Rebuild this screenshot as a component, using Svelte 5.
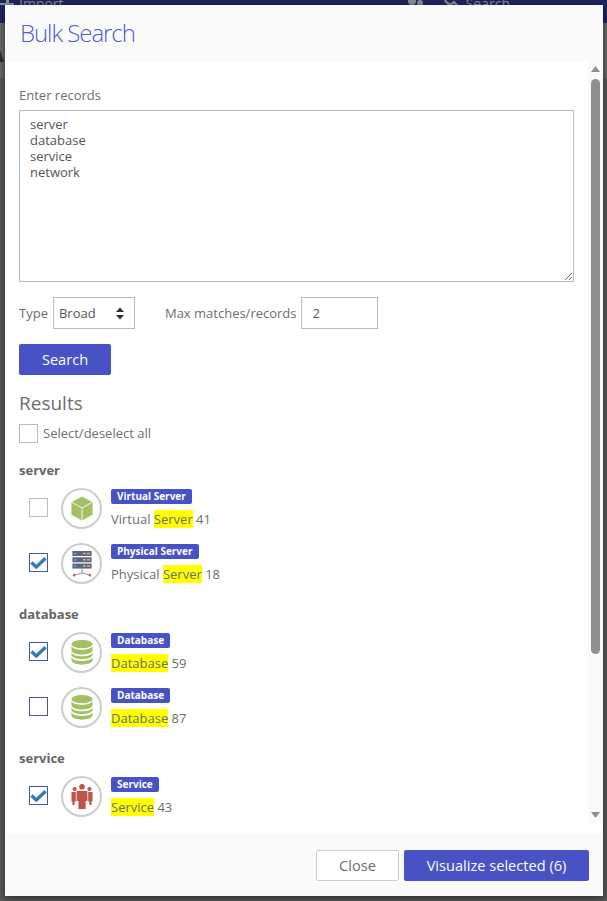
<script>
  const sections = [
    { title: 'server', items: [
      { icon: 'cube', badge: 'Virtual Server', pre: 'Virtual ', hit: 'Server', post: ' 41', state: 'off' },
      { icon: 'rack', badge: 'Physical Server', pre: 'Physical ', hit: 'Server', post: ' 18', state: 'on' }
    ]},
    { title: 'database', items: [
      { icon: 'db', badge: 'Database', pre: '', hit: 'Database', post: ' 59', state: 'on' },
      { icon: 'db', badge: 'Database', pre: '', hit: 'Database', post: ' 87', state: 'hover' }
    ]},
    { title: 'service', items: [
      { icon: 'people', badge: 'Service', pre: '', hit: 'Service', post: ' 43', state: 'on' }
    ]}
  ];
</script>

<div class="page">
  <div class="topbar">
    <div class="tool left">
      <svg width="14" height="6" viewBox="0 0 14 6"><path d="M6 0h3v3h5v3H0V3h6z" fill="#8d8e9e"/></svg>
      <span>Import</span>
    </div>
    <div class="tool right">
      <svg width="18" height="8" viewBox="0 0 18 8"><g fill="#8d8e9e"><circle cx="6" cy="1" r="4"/><circle cx="14" cy="3" r="3"/></g></svg>
      <svg class="mag" width="15" height="8" viewBox="0 0 15 8"><path d="M1 0c1 2.500 3 4 5.500 4S9 3 10 2l4 4.500" fill="none" stroke="#8d8e9e" stroke-width="2.200"/></svg>
      <span>Search</span>
    </div>
  </div>
  <div class="dim">
    <svg class="mark" width="4" height="12" viewBox="0 0 4 12"><path d="M0 0 4 12H0z" fill="#333"/></svg>
  </div>

  <div class="modal">
    <header class="head"><h1>Bulk Search</h1></header>

    <div class="middle">
      <div class="scroll">
        <div class="content">
          <label class="lbl" for="records">Enter records</label>
          <textarea id="records" spellcheck="false">server
database
service
network</textarea>

          <div class="opts">
            <span class="optlabel">Type</span>
            <div class="selectbox">
              <span>Broad</span>
              <svg width="8" height="13" viewBox="0 0 8 13"><path d="M4 0.5 8 5H0zM4 12.500 0 8h8z" fill="#333"/></svg>
            </div>
            <span class="optlabel max">Max matches/records</span>
            <input class="num" value="2" />
          </div>

          <button class="primary search-btn">Search</button>

          <h2>Results</h2>
          <div class="all"><span class="cb"></span><span class="alltext">Select/deselect all</span></div>

          <div class="results">
            {#each sections as s}
              <h3>{s.title}</h3>
              {#each s.items as it}
                <div class="row">
                  <span class="cb {it.state}">
                    {#if it.state === 'on'}
                      <svg width="17" height="13" viewBox="0 0 17 13"><path d="M1.500 6.500 6.300 11 15.500 2.300" fill="none" stroke="#337ab7" stroke-width="3.400"/></svg>
                    {/if}
                  </span>
                  <span class="circle">
                    {#if it.icon === 'cube'}
                      <svg width="22" height="25" viewBox="0 0 24 26" preserveAspectRatio="none">
                        <path d="M12 0.500 23.500 6.500V19.500L12 25.500.5 19.500V6.500z" fill="#a5bf63"/>
                        <path d="M1 6.500 12 12.500 23 6.500M12 12.500V25" fill="none" stroke="#e4ecd0" stroke-width="1.300"/>
                      </svg>
                    {:else if it.icon === 'rack'}
                      <svg width="20" height="26" viewBox="0 0 24 29" preserveAspectRatio="none">
                        <rect x="0.500" y="0" width="23" height="5.600" fill="#5c6488"/>
                        <rect x="0.500" y="7" width="23" height="5.600" fill="#5c6488"/>
                        <rect x="0.500" y="14" width="23" height="5.600" fill="#5c6488"/>
                        <path d="M13 2.800h3.500M18 2.800h3.500M13 9.800h3.500M18 9.800h3.500M13 16.800h3.500M18 16.800h3.500" stroke="#e9b44c" stroke-width="1.600"/>
                        <path d="M3 2.800h2M3 9.800h2M3 16.800h2" stroke="#a4c0d8" stroke-width="1.400"/>
                        <path d="M12 20v4.500M2.500 27 12 24.500 21.500 27" fill="none" stroke="#7c82a0" stroke-width="1"/>
                        <circle cx="2.500" cy="27" r="1.500" fill="#e2574c"/>
                        <circle cx="21.500" cy="27" r="1.500" fill="#e2574c"/>
                      </svg>
                    {:else if it.icon === 'db'}
                      <svg width="22" height="25" viewBox="0 0 24 27" preserveAspectRatio="none">
                        <ellipse cx="12" cy="4.500" rx="11.500" ry="4.500" fill="#a5bf63"/>
                        <path d="M.5 6.500C2 9.500 7 10.600 12 10.600S22 9.500 23.500 6.500V11.500C22 14.500 17 15.600 12 15.600S2 14.500.5 11.500z" fill="#a5bf63"/>
                        <path d="M.5 13.500C2 16.500 7 17.600 12 17.600S22 16.500 23.500 13.500V16.500C22 19.500 17 20.600 12 20.600S2 19.500.5 16.500z" fill="#a5bf63"/>
                        <path d="M.5 18.500C2 21.500 7 22.600 12 22.600S22 21.500 23.500 18.500V22.500C22 25.500 17 26.600 12 26.600S2 25.500.5 22.500z" fill="#a5bf63"/>
                      </svg>
                    {:else}
                      <svg width="22" height="25" viewBox="0 0 22 25">
                        <g fill="#c1534a">
                          <circle cx="11" cy="2.800" r="2.800"/>
                          <circle cx="3.600" cy="5" r="2.100"/>
                          <circle cx="18.400" cy="5" r="2.100"/>
                          <path d="M5.600 7h10.800v10h-1.800v8H7.400v-8H5.600z"/>
                          <path d="M0.500 8h4.300v9.500H3.600V21H1.400v-3.500H0.500z"/>
                          <path d="M17.200 8h4.300v9.500h-.9V21h-2.200v-3.500h-1.200z"/>
                        </g>
                      </svg>
                    {/if}
                  </span>
                  <div class="info">
                    <span class="badge">{it.badge}</span>
                    <span class="name">{it.pre}<mark>{it.hit}</mark>{it.post}</span>
                  </div>
                </div>
              {/each}
            {/each}
          </div>
        </div>
      </div>
      <div class="bar">
        <svg class="arrow" width="9" height="6" viewBox="0 0 9 6"><path d="M4.500 0 9 6H0z" fill="#8f8f8f"/></svg>
        <span class="thumb"></span>
        <svg class="arrow down" width="9" height="6" viewBox="0 0 9 6"><path d="M0 0H9L4.500 6z" fill="#8f8f8f"/></svg>
      </div>
    </div>

    <footer class="foot">
      <button class="ghost">Close</button>
      <button class="primary viz">Visualize selected (6)</button>
    </footer>
  </div>
</div>

<style>
  :global(body) { margin: 0; background: #565656; }
  * { box-sizing: border-box; }
  .page {
    position: relative;
    width: 607px;
    height: 901px;
    overflow: hidden;
    background: #5a5a5a;
    font-family: "Open Sans", sans-serif;
    font-size: 13px;
    color: #6e6e6e;
  }
  .topbar {
    height: 23px;
    background: #1f2561;
    color: #8d8e9e;
    font-size: 14px;
    display: flex;
    justify-content: space-between;
    line-height: 8px;
    padding: 0 97px 0 0;
  }
  .tool { display: flex; align-items: flex-start; height: 5px; overflow: hidden; }
  .tool span { display: block; }
  .left span { margin-left: 5px; }
  .mag { margin-left: 20px; }
  .right span { margin-left: 7px; }
  .dim { height: 55px; background: #6a6a6a; padding-top: 27px; }
  .mark { display: block; }
  .modal {
    position: absolute;
    left: 5px;
    top: 5px;
    width: 598px;
    height: 891px;
    background: #fafafa;
    display: flex;
    flex-direction: column;
    box-shadow: 0 2px 8px rgba(0,0,0,.55);
  }
  .head { height: 56px; padding: 13px 15px 0; flex: none; }
  h1 {
    margin: 0;
    font-size: 24px;
    font-weight: 300;
    line-height: 30px;
    letter-spacing: -1.05px;
    color: #4f5ad0;
  }
  .middle {
    height: 772px;
    flex: none;
    background: #fff;
    display: flex;
    align-items: flex-start;
  }
  .scroll { flex: 1; height: 772px; overflow: hidden; }
  .content { padding: 25px 14px 0; }
  .lbl { display: block; line-height: 18px; height: 24px; }
  textarea {
    display: block;
    width: 555px;
    height: 172px;
    border: 1px solid #bbb;
    border-radius: 0;
    padding: 5px 10px;
    margin: 0;
    font: 13px/16px "Open Sans", sans-serif;
    color: #555;
    background: #fff;
    outline: none;
  }
  .opts { display: flex; align-items: center; margin-top: 15px; height: 32px; }
  .optlabel { line-height: 18px; }
  .selectbox {
    width: 82px;
    height: 32px;
    margin-left: 5px;
    border: 1px solid #bbb;
    display: flex;
    align-items: center;
    justify-content: space-between;
    padding: 0 10px 0 5px;
    color: #555;
  }
  .max { margin-left: 30px; }
  .num {
    width: 77px;
    height: 32px;
    margin-left: 4px;
    border: 1px solid #bbb;
    border-radius: 0;
    padding: 0 11px;
    font: 13px "Open Sans", sans-serif;
    color: #555;
    outline: none;
  }
  button { font-family: "Open Sans", sans-serif; cursor: pointer; }
  .primary {
    background: #4752c4;
    color: #fff;
    border: 0;
    border-radius: 2px;
    font-size: 14.6px;
    height: 31px;
    padding: 0 0 2px;
  }
  .search-btn { display: block; width: 92px; margin-top: 15px; }
  h2 {
    margin: 15px 0 0;
    font-size: 19px;
    font-weight: 400;
    line-height: 26px;
    color: #6e6e6e;
  }
  .all { display: flex; align-items: center; gap: 5px; margin-top: 8px; height: 19px; }
  .alltext { padding-bottom: 1px; }
  .results { padding-top: 11px; }
  h3 {
    margin: 0;
    font-size: 13px;
    font-weight: 700;
    line-height: 18px;
    color: #666;
    padding-top: 7px;
    height: 34px;
  }
  .cb {
    width: 19px;
    height: 19px;
    flex: none;
    border: 1px solid #bbb;
    background: #fff;
    display: flex;
    align-items: center;
    justify-content: center;
  }
  .cb.on, .cb.hover { border-color: #4752c4; }
  .row {
    display: flex;
    align-items: flex-start;
    height: 55px;
    padding-left: 10px;
  }
  .row .cb { margin-top: 10px; }
  .circle {
    width: 41px;
    height: 41px;
    margin-left: 13px;
    flex: none;
    border: 2px solid #ccc;
    border-radius: 50%;
    display: flex;
    align-items: center;
    justify-content: center;
  }
  .info {
    margin-left: 9px;
    padding-top: 1px;
    display: flex;
    flex-direction: column;
    align-items: flex-start;
  }
  .badge {
    background: #4752c4;
    color: #fff;
    font-size: 10px;
    font-weight: 700;
    line-height: 15px;
    height: 15px;
    border-radius: 2px;
    padding: 0 6px;
    white-space: nowrap;
  }
  .name { margin-top: 6px; line-height: 18px; white-space: pre; }
  mark { background: #ff0; color: #6e6e6e; }
  .bar {
    width: 15px;
    height: 762px;
    flex: none;
    background: #fafafa;
    position: relative;
    display: flex;
    flex-direction: column;
    align-items: center;
  }
  .arrow { margin-top: 5px; flex: none; }
  .thumb {
    width: 9px;
    height: 575px;
    margin-top: 7px;
    background: #8f8f8f;
    border-radius: 5px;
    flex: none;
  }
  .down { margin-top: auto; margin-bottom: 5px; }
  .foot {
    flex: 1;
    display: flex;
    justify-content: flex-end;
    gap: 5px;
    padding: 17px 14px 0 0;
  }
  .ghost {
    width: 83px;
    height: 31px;
    background: #fff;
    border: 1px solid #ccc;
    border-radius: 2px;
    color: #6e6e6e;
    font-size: 14.6px;
    padding: 0 0 2px;
  }
  .viz { width: 185px; }
</style>
